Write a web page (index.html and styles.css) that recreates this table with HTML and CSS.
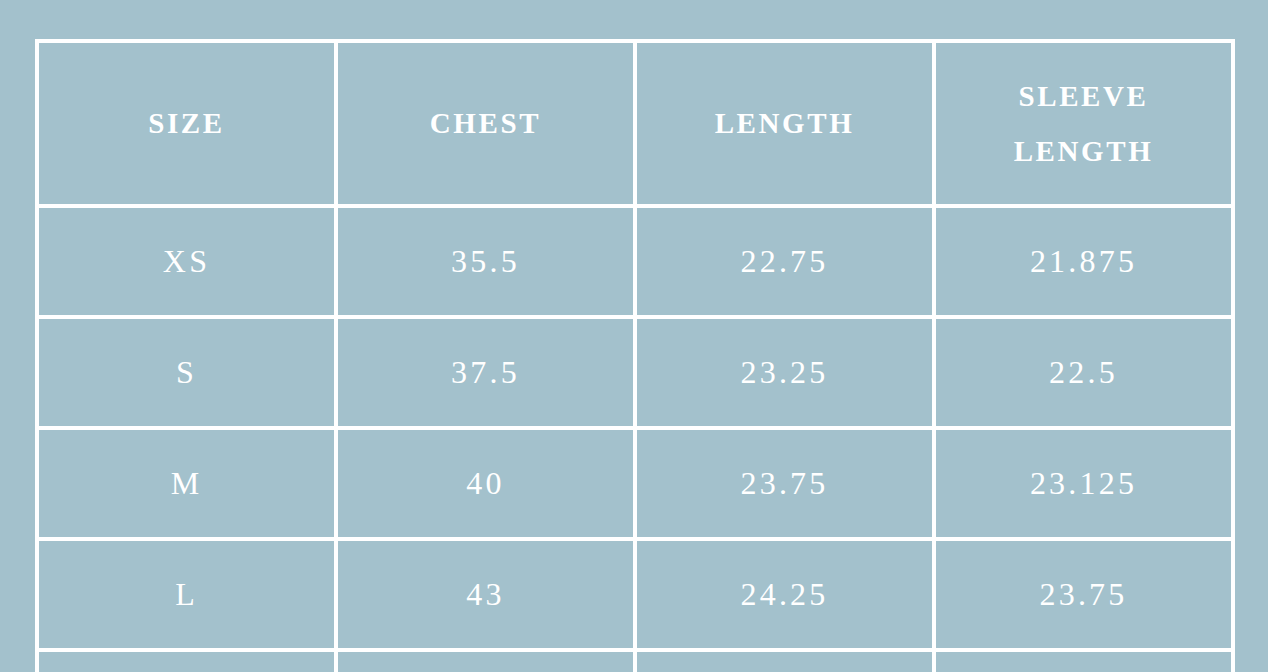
FILE: index.html
```html
<!DOCTYPE html>
<html lang="en">
<head>
<meta charset="utf-8">
<title>Size Chart</title>
<link rel="stylesheet" href="styles.css">
</head>
<body>
<table class="size-table">
  <colgroup>
    <col class="col"><col class="col"><col class="col"><col class="col">
  </colgroup>
  <thead>
    <tr>
      <th>SIZE</th>
      <th>CHEST</th>
      <th>LENGTH</th>
      <th>SLEEVE<br>LENGTH</th>
    </tr>
  </thead>
  <tbody>
    <tr><td>XS</td><td>35.5</td><td>22.75</td><td>21.875</td></tr>
    <tr><td>S</td><td>37.5</td><td>23.25</td><td>22.5</td></tr>
    <tr><td>M</td><td>40</td><td>23.75</td><td>23.125</td></tr>
    <tr><td>L</td><td>43</td><td>24.25</td><td>23.75</td></tr>
    <tr><td></td><td></td><td></td><td></td></tr>
  </tbody>
</table>
</body>
</html>
```
FILE: styles.css
```css
html, body {
  margin: 0;
  padding: 0;
  background: #a3c1cc;
  height: 100%;
  overflow: hidden;
}
.size-table {
  margin: 39px 0 0 35px;
  width: 1200px;
  table-layout: fixed;
  border-spacing: 0;
  border-left: 4px solid #fff;
  border-top: 4px solid #fff;
  color: #fff;
  font-family: "Liberation Serif", "Times New Roman", serif;
}
.col { width: 299px; }
.size-table th,
.size-table td {
  border-right: 4px solid #fff;
  border-bottom: 4px solid #fff;
  text-align: center;
  vertical-align: middle;
  padding: 0;
}
.size-table th {
  height: 161px;
  font-weight: bold;
  font-size: 29px;
  line-height: 55px;
  letter-spacing: 0.09em;
}
.size-table td {
  height: 107px;
  font-weight: normal;
  font-size: 32px;
  letter-spacing: 0.1em;
}
```
